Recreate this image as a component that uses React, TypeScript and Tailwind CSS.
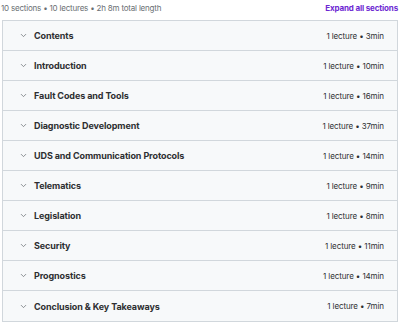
import { ChevronDown } from 'lucide-react';

const SECTIONS = [
  { title: 'Contents', meta: '1 lecture • 3min' },
  { title: 'Introduction', meta: '1 lecture • 10min' },
  { title: 'Fault Codes and Tools', meta: '1 lecture • 16min' },
  { title: 'Diagnostic Development', meta: '1 lecture • 37min' },
  { title: 'UDS and Communication Protocols', meta: '1 lecture • 14min' },
  { title: 'Telematics', meta: '1 lecture • 9min' },
  { title: 'Legislation', meta: '1 lecture • 8min' },
  { title: 'Security', meta: '1 lecture • 11min' },
  { title: 'Prognostics', meta: '1 lecture • 14min' },
  { title: 'Conclusion & Key Takeaways', meta: '1 lecture • 7min' },
];

export default function App() {
  return (
    <div className="w-[400px] h-[323px] bg-white font-['Inter',sans-serif] text-[#2d2f31]">
      {/* Summary line */}
      <div className="h-[20px] flex items-start justify-between pl-[1px] pr-[2px] pt-[3px]">
        <span className="text-[8px] leading-[10px] text-[#6a6f73] tracking-[-0.2px]">
          10 sections • 10 lectures • 2h 8m total length
        </span>
        <span className="text-[8px] leading-[10px] font-bold text-[#6d28d2] tracking-[-0.15px]">
          Expand all sections
        </span>
      </div>

      {/* Sections accordion */}
      <div className="mx-[2px] border border-[#d1d7dc]">
        {SECTIONS.map((s, i) => (
          <div
            key={s.title}
            className={`h-[30px] flex items-center bg-[#f7f9fa] pl-[16px] pr-[13px] ${
              i < SECTIONS.length - 1 ? 'border-b border-[#d1d7dc]' : ''
            }`}
          >
            <ChevronDown size={9} strokeWidth={2} className="text-[#6a6f73] mr-[6px]" />
            <span className="text-[9px] font-bold leading-none tracking-[-0.1px]">{s.title}</span>
            <span className="ml-auto text-[8px] leading-none text-[#2d2f31] tracking-[-0.1px]">{s.meta}</span>
          </div>
        ))}
      </div>
    </div>
  );
}
